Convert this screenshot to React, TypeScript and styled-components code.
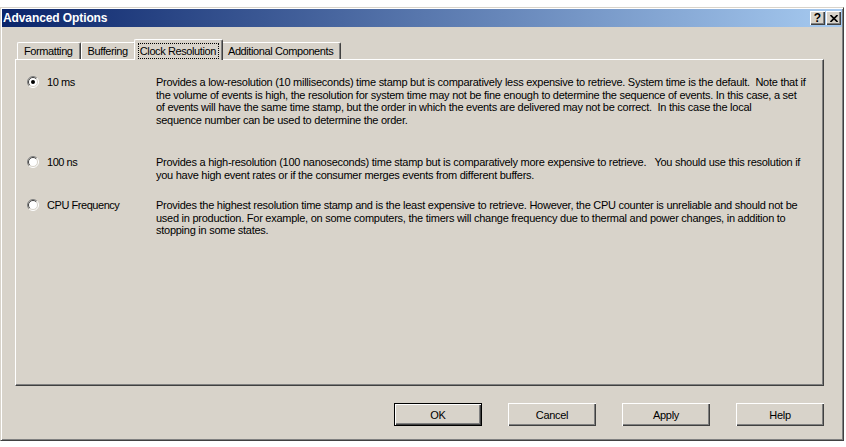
import React, { useState } from "react";
import styled, { createGlobalStyle } from "styled-components";

const face = "#d8d3ca";

const GlobalStyle = createGlobalStyle`
  html, body {
    margin: 0;
    padding: 0;
    background: #ffffff;
  }
  body {
    font-family: "Liberation Sans", Arial, sans-serif;
    font-size: 11px;
    color: #000;
  }
`;

const Window = styled.div`
  box-sizing: border-box;
  width: 844px;
  height: 434px;
  margin-top: 7px;
  padding: 1px;
  background: ${face};
  border-top: 1px solid ${face};
  border-left: 1px solid ${face};
  border-right: 1px solid #404040;
  border-bottom: 1px solid #404040;
  box-shadow: inset 1px 1px 0 #ffffff, inset -1px -1px 0 #808080;
  display: flex;
  flex-direction: column;
`;

const TitleBar = styled.div`
  height: 18px;
  display: flex;
  align-items: center;
  padding: 0 1px 0 1px;
  background: linear-gradient(to right, #0a246a, #a6caf0);
`;

const TitleText = styled.div`
  flex: 1;
  color: #ffffff;
  font-weight: bold;
  font-size: 12px;
  letter-spacing: -0.1px;
`;

const CaptionButtons = styled.div`
  display: flex;
  gap: 1px;
`;

const CaptionButton = styled.div`
  box-sizing: border-box;
  width: 15px;
  height: 14px;
  background: ${face};
  box-shadow: inset 1px 1px 0 #ffffff, inset -1px -1px 0 #404040,
    inset -2px -2px 0 #808080;
  display: flex;
  align-items: center;
  justify-content: center;
  font-weight: bold;
  font-size: 12px;
  line-height: 1;
`;

const Body = styled.div`
  flex: 1;
  display: flex;
  flex-direction: column;
  padding: 12px 18px 0 13px;
`;

const TabStrip = styled.div`
  height: 20px;
  display: flex;
  align-items: flex-end;
  padding-left: 2px;
`;

const Tab = styled.div<{ $active?: boolean }>`
  box-sizing: border-box;
  position: relative;
  z-index: ${(p) => (p.$active ? 1 : 0)};
  height: ${(p) => (p.$active ? "21px" : "17px")};
  margin: ${(p) => (p.$active ? "0 -2px -1px -2px" : "0")};
  padding: ${(p) => (p.$active ? "1px 4px 0 4px" : "0 5px")};
  display: flex;
  align-items: center;
  background: ${face};
  border-top: 1px solid #ffffff;
  border-left: 1px solid #ffffff;
  border-right: 1px solid #404040;
  border-radius: 2px 2px 0 0;
  box-shadow: inset -1px 0 0 #808080;
  white-space: nowrap;
  letter-spacing: -0.4px;
  cursor: default;
`;

const FocusLabel = styled.span<{ $focused?: boolean }>`
  padding: 1px 2px 1px 1px;
  outline: ${(p) => (p.$focused ? "1px dotted #000" : "none")};
  outline-offset: 0;
`;

const Panel = styled.div`
  box-sizing: border-box;
  height: 327px;
  border-top: 1px solid #ffffff;
  border-left: 1px solid #ffffff;
  border-right: 1px solid #404040;
  border-bottom: 1px solid #404040;
  box-shadow: inset -1px -1px 0 #808080;
  padding: 16px 0 0 11px;
  display: flex;
  flex-direction: column;
`;

const OptionRow = styled.div<{ $gap: number }>`
  display: grid;
  grid-template-columns: 129px 1fr;
  margin-top: ${(p) => p.$gap}px;
`;

const RadioLabel = styled.label`
  display: flex;
  align-items: center;
  gap: 8px;
  height: 12.5px;
  white-space: nowrap;
  letter-spacing: -0.45px;
  cursor: default;
`;

const Description = styled.div`
  line-height: 12.5px;
  letter-spacing: -0.26px;
`;

const Line = styled.div`
  white-space: pre;
`;

const ButtonRow = styled.div`
  display: flex;
  justify-content: flex-end;
  gap: 26px;
  margin-top: 17px;
`;

const PushButton = styled.button<{ $default?: boolean }>`
  box-sizing: border-box;
  width: 88px;
  height: 23px;
  padding: 0;
  font-family: "Liberation Sans", Arial, sans-serif;
  font-size: 11px;
  letter-spacing: -0.3px;
  color: #000;
  background: ${face};
  border: ${(p) => (p.$default ? "1px solid #000" : "none")};
  box-shadow: inset 1px 1px 0 #ffffff, inset -1px -1px 0 #404040,
    inset -2px -2px 0 #808080;
  cursor: default;
`;

const Radio = ({ checked }: { checked: boolean }) => (
  <svg width="12" height="12" viewBox="0 0 12 12">
    <circle cx="6" cy="6" r="5" fill="#ffffff" />
    <path d="M2.1 9.9 A5.5 5.5 0 0 1 9.9 2.1" fill="none" stroke="#808080" />
    <path d="M2.8 9.2 A4.5 4.5 0 0 1 9.2 2.8" fill="none" stroke="#404040" />
    <path d="M9.9 2.1 A5.5 5.5 0 0 1 2.1 9.9" fill="none" stroke="#ffffff" />
    <path d="M9.2 2.8 A4.5 4.5 0 0 1 2.8 9.2" fill="none" stroke={face} />
    {checked && <circle cx="6" cy="6" r="2" fill="#000" />}
  </svg>
);

const CloseGlyph = () => (
  <svg width="8" height="7" viewBox="0 0 8 7">
    <path d="M0.5 0 L7.5 7 M7.5 0 L0.5 7" stroke="#000" strokeWidth="1.6" />
  </svg>
);

const options = [
  {
    id: "10ms",
    label: "10 ms",
    gap: 0,
    lines: [
      "Provides a low-resolution (10 milliseconds) time stamp but is comparatively less expensive to retrieve. System time is the default.  Note that if",
      "the volume of events is high, the resolution for system time may not be fine enough to determine the sequence of events. In this case, a set",
      "of events will have the same time stamp, but the order in which the events are delivered may not be correct.  In this case the local",
      "sequence number can be used to determine the order.",
    ],
  },
  {
    id: "100ns",
    label: "100 ns",
    gap: 30,
    lines: [
      "Provides a high-resolution (100 nanoseconds) time stamp but is comparatively more expensive to retrieve.   You should use this resolution if",
      "you have high event rates or if the consumer merges events from different buffers.",
    ],
  },
  {
    id: "cpu",
    label: "CPU Frequency",
    gap: 18,
    lines: [
      "Provides the highest resolution time stamp and is the least expensive to retrieve. However, the CPU counter is unreliable and should not be",
      "used in production. For example, on some computers, the timers will change frequency due to thermal and power changes, in addition to",
      "stopping in some states.",
    ],
  },
];

const tabs = ["Formatting", "Buffering", "Clock Resolution", "Additional Components"];

const App = () => {
  const [activeTab, setActiveTab] = useState("Clock Resolution");
  const [resolution, setResolution] = useState("10ms");

  return (
    <>
      <GlobalStyle />
      <Window>
        <TitleBar>
          <TitleText>Advanced Options</TitleText>
          <CaptionButtons>
            <CaptionButton>?</CaptionButton>
            <CaptionButton>
              <CloseGlyph />
            </CaptionButton>
          </CaptionButtons>
        </TitleBar>
        <Body>
          <TabStrip>
            {tabs.map((t) => (
              <Tab key={t} $active={t === activeTab} onClick={() => setActiveTab(t)}>
                <FocusLabel $focused={t === activeTab}>{t}</FocusLabel>
              </Tab>
            ))}
          </TabStrip>
          <Panel>
            {options.map((o) => (
              <OptionRow key={o.id} $gap={o.gap}>
                <RadioLabel onClick={() => setResolution(o.id)}>
                  <Radio checked={resolution === o.id} />
                  {o.label}
                </RadioLabel>
                <Description>
                  {o.lines.map((l, i) => (
                    <Line key={i}>{l}</Line>
                  ))}
                </Description>
              </OptionRow>
            ))}
          </Panel>
          <ButtonRow>
            <PushButton $default>OK</PushButton>
            <PushButton>Cancel</PushButton>
            <PushButton>Apply</PushButton>
            <PushButton>Help</PushButton>
          </ButtonRow>
        </Body>
      </Window>
    </>
  );
};

export default App;
